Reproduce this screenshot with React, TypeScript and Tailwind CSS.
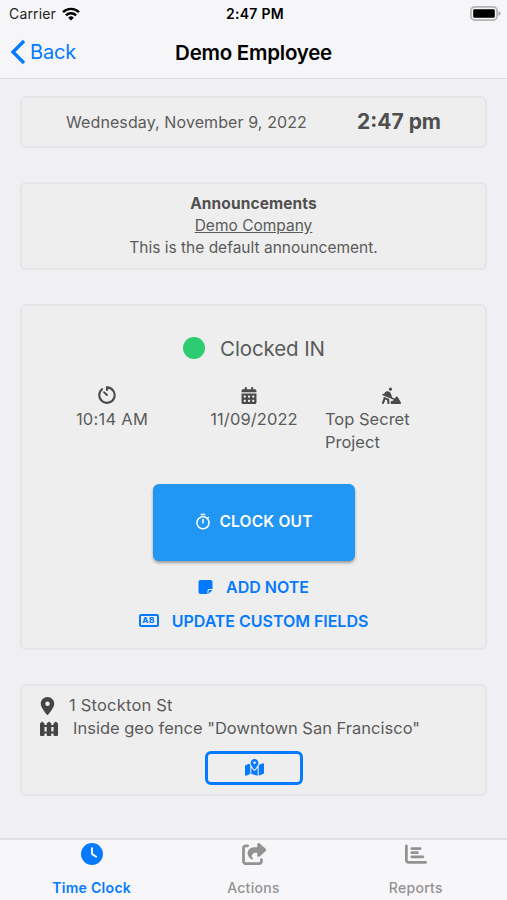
import React from 'react';
import {
  FaCalendarDays,
  FaChartBar,
  FaClock,
  FaLocationDot,
  FaMapLocationDot,
  FaNoteSticky,
  FaPersonDigging,
  FaShareFromSquare,
} from 'react-icons/fa6';
import { MdOutlineTimer } from 'react-icons/md';

const WifiIcon = () => (
  <svg viewBox="0 0 18 14" className="w-[18px] h-[14px]" fill="none" stroke="#000" strokeWidth="2.4">
    <path d="M1 5.2a11.3 11.3 0 0 1 16 0" />
    <path d="M3.9 8.3a7.2 7.2 0 0 1 10.2 0" />
    <path d="M9 13.4 6.2 10.7a4 4 0 0 1 5.6 0z" fill="#000" stroke="none" />
  </svg>
);

const BatteryIcon = () => (
  <svg viewBox="0 0 31 15" className="w-[31px] h-[15px]">
    <rect x="0.9" y="0.9" width="26.2" height="13.2" rx="3.8" fill="#f6f6f8" stroke="#b4b4b6" strokeWidth="1.7" />
    <rect x="3.2" y="3.2" width="21.6" height="8.6" rx="1.2" fill="#000" />
    <path d="M28.4 5.2c1.7.5 2.2 1.3 2.2 2.3s-.5 1.8-2.2 2.3z" fill="#a9a9ab" />
  </svg>
);

const TimerIcon = () => (
  <svg viewBox="0 0 18 18" className="w-[18px] h-[18px]" fill="none" stroke="currentColor" strokeWidth="2.1" strokeLinecap="round">
    <path d="M9 4V1.4A7.7 7.7 0 1 1 4 3.2" />
    <path d="M6 6.1 9 9" strokeWidth="1.8" />
  </svg>
);

const FenceIcon = () => (
  <svg viewBox="0 0 18 16" className="w-[18px] h-[16px]" fill="currentColor">
    <path d="M0 2.6 2.2.6l2.3 2V14q0 1-1 1H1q-1 0-1-1z" />
    <path d="M6.7 2.6 9 .6l2.3 2V14q0 1-1 1H7.7q-1 0-1-1z" />
    <path d="M13.5 2.6 15.8.6l2.2 2V14q0 1-1 1h-2.5q-1 0-1-1z" />
    <path d="M4 4h3v2H4zM11 4h3v2h-3zM4 10.5h3v2H4zM11 10.5h3v2h-3z" />
  </svg>
);

const FieldsIcon = () => (
  <svg viewBox="0 0 20 13" className="w-5 h-[13px]" fill="currentColor">
    <rect x="1" y="1" width="18" height="11" rx="1.2" fill="none" stroke="currentColor" strokeWidth="2" />
    <text x="3.3" y="9.4" className="font-['Inter',sans-serif] text-[8px] font-extrabold" letterSpacing="0.6">
      AB
    </text>
  </svg>
);

const Card: React.FC<{ className: string; children: React.ReactNode }> = ({ className, children }) => (
  <section className={`rounded-md border-2 border-[#e5e5e8] bg-[#eeeeee] ${className}`}>{children}</section>
);

const App: React.FC = () => (
  <div className="flex flex-col w-full h-[900px] overflow-hidden bg-[#efeff4] font-['Inter',sans-serif] text-base text-[#5b5b5b]">
    {/* Header */}
    <header className="h-[79px] shrink-0 border-b border-[#dcdcde] bg-[#f6f6f8] text-black">
      <div className="grid grid-cols-3 items-center h-[27px] pl-[9px] pr-[6px] text-[14px]">
        <div className="flex items-center gap-[6px]">
          <span className="text-[#222] tracking-[0.15px]">Carrier</span>
          <WifiIcon />
        </div>
        <span className="text-center font-semibold tracking-[0.3px]">2:47 PM</span>
        <div className="flex justify-end">
          <BatteryIcon />
        </div>
      </div>
      <div className="grid grid-cols-[1fr_auto_1fr] items-center h-[50px] pl-[10px] pr-[10px]">
        <div className="flex items-center gap-1 text-[#057aff]">
          <svg viewBox="0 0 16 26" className="w-4 h-[26px]" fill="none" stroke="currentColor" strokeWidth="3.4">
            <path d="M14 2 3 13l11 11" />
          </svg>
          <span className="text-[20px] tracking-[-0.2px]">Back</span>
        </div>
        <h1 className="pt-[2px] text-[20.5px] font-semibold tracking-[-0.25px]">Demo Employee</h1>
      </div>
    </header>

    <main className="flex flex-col flex-1 gap-[34px] px-5 pt-[17px]">
      {/* Date and time */}
      <Card className="flex items-center h-[52px] pl-11">
        <span className="w-[291px] tracking-[0.1px] pb-px">Wednesday, November 9, 2022</span>
        <span className="text-[21px] font-bold text-[#4f4f4f]">2:47 pm</span>
      </Card>

      {/* Announcements */}
      <Card className="h-[88px] pt-[9px] text-center text-[15.5px] leading-[22px]">
        <h2 className="font-bold text-[#505050] tracking-[0.1px]">Announcements</h2>
        <p className="underline">Demo Company</p>
        <p>This is the default announcement.</p>
      </Card>

      {/* Clock status */}
      <Card className="flex flex-col items-center h-[346px] pt-[26px]">
        <div className="flex items-center gap-[15px] h-8 pl-px text-[20.5px] tracking-[-0.1px]">
          <span className="w-[22px] h-[22px] rounded-full bg-[#2ecc71]"></span>
          <span className="pt-[2px]">Clocked IN</span>
        </div>

        <div className="grid grid-cols-3 self-start w-[426px] ml-[14px] mt-[22px] text-[16.5px] leading-[23px]">
          <div className="flex flex-col items-center">
            <span className="flex items-center h-[18px] text-[#4a4a4a]">
              <TimerIcon />
            </span>
            <span className="mt-1 pl-[10px] tracking-[0.25px]">10:14 AM</span>
          </div>
          <div className="flex flex-col items-center">
            <span className="flex items-center h-[18px] text-[#4a4a4a]">
              <FaCalendarDays className="w-[18px] h-[17px]" />
            </span>
            <span className="mt-1 pl-[10px] tracking-[0.1px]">11/09/2022</span>
          </div>
          <div className="flex flex-col items-center">
            <span className="flex items-center h-[18px] text-[#4a4a4a]">
              <FaPersonDigging className="w-[19px] h-[17px]" />
            </span>
            <span className="mt-1 w-[132px]">Top Secret Project</span>
          </div>
        </div>

        <button className="flex items-center justify-center gap-[7px] w-[202px] h-[77px] mt-[29.5px] rounded-md bg-[#2196f3] font-semibold text-[15.5px] tracking-[0.2px] text-white shadow-[0_2px_3px_rgba(0,0,0,0.35)]">
          <MdOutlineTimer className="w-[18px] h-[18px]" />
          CLOCK OUT
        </button>
        <button className="flex items-center gap-[13px] h-[34px] mt-[9px] font-semibold text-[16px] text-[#057aff]">
          <FaNoteSticky className="w-[15px] h-[16px]" />
          ADD NOTE
        </button>
        <button className="flex items-center gap-[13px] h-[34px] font-semibold text-[16px] tracking-[-0.03px] text-[#057aff]">
          <FieldsIcon />
          UPDATE CUSTOM FIELDS
        </button>
      </Card>

      {/* Location */}
      <Card className="flex flex-col h-[112px] pt-2 pl-[18px] text-[16.5px] leading-[23px]">
        <div className="flex items-center tracking-[0.2px]">
          <FaLocationDot className="w-[15px] h-[18px] text-[#444] mr-[14px]" />
          1 Stockton St
        </div>
        <div className="flex items-center gap-[15px]">
          <span className="text-[#444]">
            <FenceIcon />
          </span>
          Inside geo fence "Downtown San Francisco"
        </div>
        <button className="flex items-center justify-center w-[98px] h-[34px] mt-[11px] ml-[165px] rounded-md border-[3px] border-[#057aff] text-[#057aff]">
          <FaMapLocationDot className="w-[19px] h-[17px] mb-[2px]" />
        </button>
      </Card>
    </main>

    {/* Tab bar */}
    <nav className="grid grid-cols-3 h-[62px] shrink-0 px-[10px] border-t-2 border-[#e0e0e3] bg-[#f7f7f9] text-[14px] font-medium tracking-[0.3px] text-[#929292]">
      <div className="flex flex-col items-center pt-[3px] pl-px text-[#057aff]">
        <FaClock className="w-[22px] h-[22px]" />
        <span className="mt-3 font-semibold">Time Clock</span>
      </div>
      <div className="flex flex-col items-center pt-[3px]">
        <FaShareFromSquare className="w-[25px] h-[22px] ml-[2px]" />
        <span className="mt-3">Actions</span>
      </div>
      <div className="flex flex-col items-center pt-[3px]">
        <FaChartBar className="w-[22px] h-[22px]" />
        <span className="mt-3">Reports</span>
      </div>
    </nav>
  </div>
);

export default App;
